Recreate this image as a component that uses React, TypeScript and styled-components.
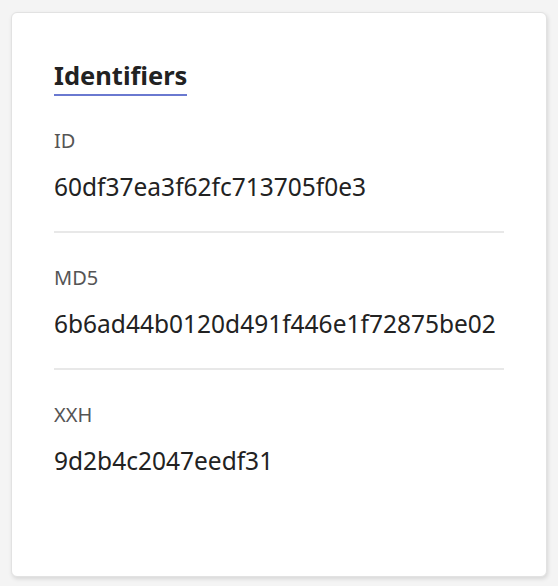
import styled, { createGlobalStyle } from "styled-components";

const GlobalStyle = createGlobalStyle`
  html, body {
    margin: 0;
    padding: 0;
    background: #f4f4f4;
    font-family: "Noto Sans", "Open Sans", sans-serif;
  }
`;

const Page = styled.div`
  padding: 12px 11px 9px 11px;
`;

const Card = styled.section`
  box-sizing: border-box;
  height: 565px;
  background: #ffffff;
  border: 1px solid #e2e2e2;
  border-radius: 6px;
  box-shadow: 1px 2px 4px rgba(0, 0, 0, 0.12);
  padding: 47px 42px 0 42px;
`;

const Title = styled.h2`
  display: inline-block;
  margin: 0;
  padding-bottom: 4px;
  border-bottom: 2px solid #6a79d0;
  font-size: 25.5px;
  line-height: 30px;
  font-weight: 700;
  color: #222222;
`;

const Field = styled.div`
  padding: 32px 0 28px;
  & + & {
    border-top: 2px solid #e8e8e8;
  }
`;

const Label = styled.div`
  font-size: 20px;
  line-height: 26px;
  color: #555555;
  margin-bottom: 17px;
`;

const Value = styled.div`
  font-size: 24.5px;
  line-height: 32px;
  color: #222222;
`;

const fields = [
  { label: "ID", value: "60df37ea3f62fc713705f0e3" },
  { label: "MD5", value: "6b6ad44b0120d491f446e1f72875be02" },
  { label: "XXH", value: "9d2b4c2047eedf31" },
];

const App = () => {
  return (
    <Page>
      <GlobalStyle />
      <Card>
        <Title>Identifiers</Title>
        {fields.map((f) => (
          <Field key={f.label}>
            <Label>{f.label}</Label>
            <Value>{f.value}</Value>
          </Field>
        ))}
      </Card>
    </Page>
  );
};

export default App;
